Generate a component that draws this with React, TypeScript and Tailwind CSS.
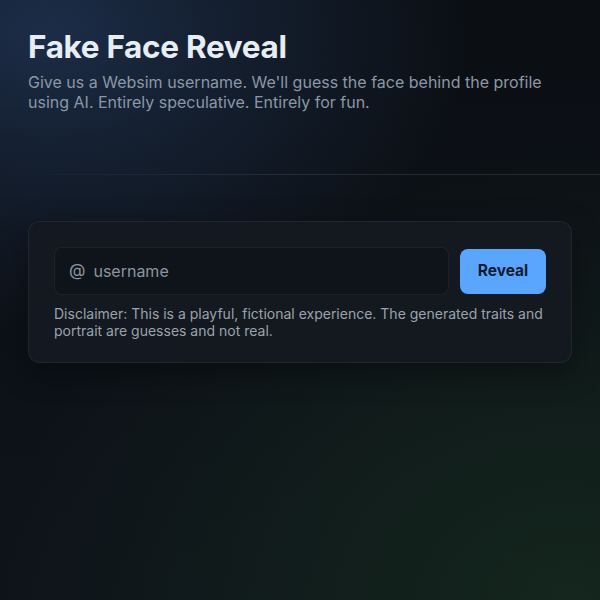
export default function App() {
  return (
    <div
      className="relative min-h-[600px] w-full overflow-hidden bg-[#0b0f14] text-[#e6edf3]"
      style={{ fontFamily: "Inter, 'Noto Sans', sans-serif" }}
    >
      {/* background glows */}
      <div className="pointer-events-none absolute inset-0 bg-gradient-to-b from-[#0b0f14] to-[#0e131a]" />
      <div className="pointer-events-none absolute inset-0 bg-[radial-gradient(ellipse_70%_50%_at_8%_5%,#1c2d48_0%,rgba(28,45,72,0.55)_40%,transparent_100%)]" />
      <div className="pointer-events-none absolute inset-0 bg-[radial-gradient(ellipse_95%_75%_at_95%_100%,#14261d_0%,rgba(20,38,29,0.55)_45%,transparent_100%)]" />

      <div className="relative">
        {/* Header */}
        <header className="relative px-7 pt-[29px] pb-[63px]">
          <h1 className="text-[31.5px] font-bold leading-9 tracking-[-0.01em] text-[#e6edf3]">
            Fake Face Reveal
          </h1>
          <p className="mt-[7px] text-[16px] leading-5 text-[#8b97a6]">
            Give us a Websim username. We'll guess the face behind the profile
            using AI. Entirely speculative. Entirely for fun.
          </p>
          <div className="absolute bottom-0 left-0 right-0 h-px bg-gradient-to-r from-transparent via-white/10 to-white/10" />
        </header>

        {/* Card */}
        <main className="px-7 pt-[46px]">
          <div className="rounded-xl border border-white/[0.06] bg-[#151a21]/90 px-[25px] pt-[25px] pb-[23px] shadow-[0_10px_30px_rgba(0,0,0,0.35)]">
            <div className="flex items-center gap-[11px]">
              <div className="flex h-12 flex-1 items-center rounded-lg border border-white/[0.06] bg-[#0f141a] px-[14px]">
                <span className="text-[17px] text-[#8b95a1]">@</span>
                <input
                  placeholder="username"
                  className="ml-[8px] w-full bg-transparent text-base text-[#e6edf3] outline-none placeholder:text-[#8b95a1]"
                />
              </div>
              <button className="h-[45px] w-[86px] rounded-lg bg-[#58a6ff] text-[15.5px] font-bold text-[#0b1a2e]">
                Reveal
              </button>
            </div>
            <p className="mt-[10px] text-[14px] leading-[17px] text-[#9aa3ad]">
              Disclaimer: This is a playful, fictional experience. The generated
              traits and portrait are guesses and not real.
            </p>
          </div>
        </main>
      </div>
    </div>
  );
}
